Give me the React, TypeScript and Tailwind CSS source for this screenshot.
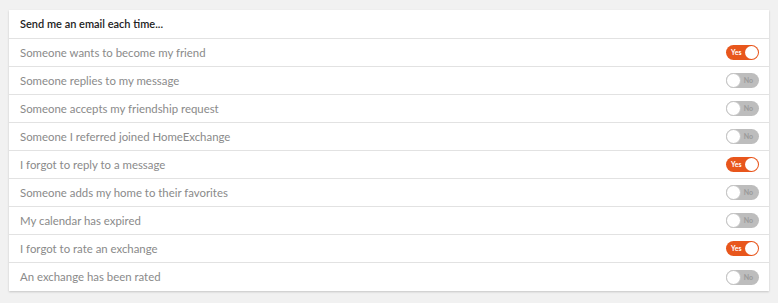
const ROWS: { label: string; on: boolean }[] = [
  { label: "Someone wants to become my friend", on: true },
  { label: "Someone replies to my message", on: false },
  { label: "Someone accepts my friendship request", on: false },
  { label: "Someone I referred joined HomeExchange", on: false },
  { label: "I forgot to reply to a message", on: true },
  { label: "Someone adds my home to their favorites", on: false },
  { label: "My calendar has expired", on: false },
  { label: "I forgot to rate an exchange", on: true },
  { label: "An exchange has been rated", on: false },
];

function Toggle({ on }: { on: boolean }) {
  if (on) {
    return (
      <div className="flex h-[15px] w-[33px] items-center justify-between rounded-full bg-[#e8561c] pl-[5px] pr-[1px]">
        <span className="text-[7px] font-bold leading-none text-white">Yes</span>
        <span className="h-[13px] w-[13px] rounded-full bg-white" />
      </div>
    );
  }
  return (
    <div className="flex h-[15px] w-[33px] items-center justify-between rounded-full bg-[#bdbdbd] pl-0 pr-[6px]">
      <span className="h-[15px] w-[15px] rounded-full border border-[#c4c4c4] bg-white" />
      <span className="text-[7px] font-bold leading-none text-[#999]">No</span>
    </div>
  );
}

export default function App() {
  return (
    <div className="min-h-[303px] w-full bg-[#f1f1f1] px-[9px] pt-[10px] font-['Lato',sans-serif]">
      <div className="bg-white shadow-[0_1px_2px_rgba(0,0,0,0.18)]">
        <div className="flex h-[29px] items-center border-b border-[#e2e2e2] px-[11px] pt-[1px] text-[11px] font-semibold text-[#222]">
          Send me an email each time...
        </div>
        {ROWS.map((r, i) => (
          <div
            key={r.label}
            className={`flex h-[28px] items-center justify-between pl-[11px] pr-[10px] text-[11.4px] text-[#8a8a8a] ${
              i < ROWS.length - 1 ? "border-b border-[#e2e2e2]" : ""
            }`}
          >
            <span>{r.label}</span>
            <Toggle on={r.on} />
          </div>
        ))}
      </div>
    </div>
  );
}
